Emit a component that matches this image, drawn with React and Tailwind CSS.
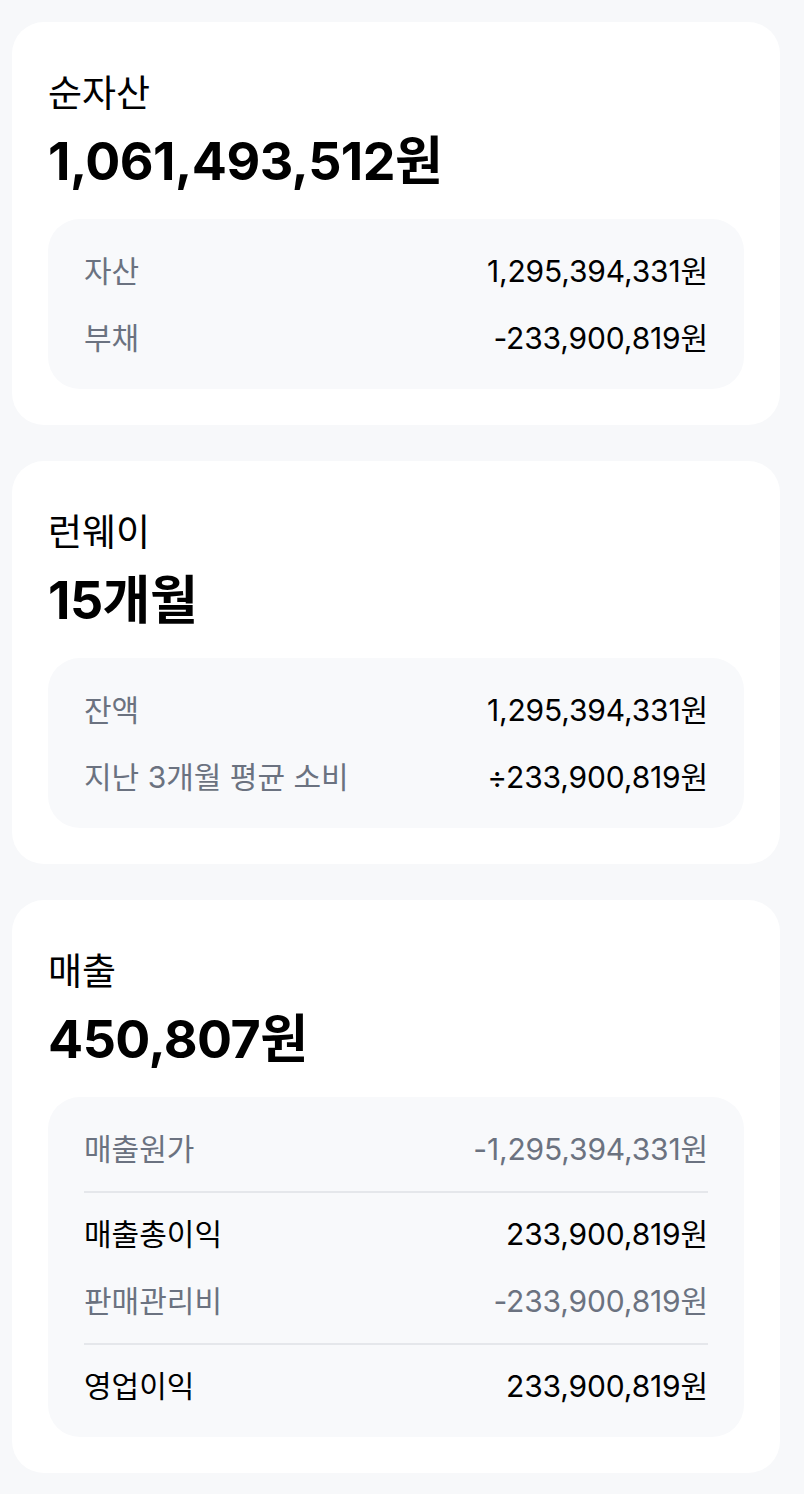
const FONT = 'font-["Inter","Noto_Sans_CJK_KR",sans-serif]';

const SECTIONS = [
  {
    title: '순자산',
    value: '1,061,493,512원',
    rows: [
      { label: '자산', value: '1,295,394,331원' },
      { label: '부채', value: '-233,900,819원' },
    ],
  },
  {
    title: '런웨이',
    value: '15개월',
    rows: [
      { label: '잔액', value: '1,295,394,331원' },
      { label: '지난 3개월 평균 소비', value: '÷233,900,819원' },
    ],
  },
  {
    title: '매출',
    value: '450,807원',
    rows: [
      { label: '매출원가', value: '-1,295,394,331원', muted: true, divider: true },
      { label: '매출총이익', value: '233,900,819원', strong: true },
      { label: '판매관리비', value: '-233,900,819원', muted: true, divider: true },
      { label: '영업이익', value: '233,900,819원', strong: true },
    ],
  },
];

function Row({ row }) {
  const labelColor = row.strong ? 'text-black' : 'text-[#6b7280]';
  const valueColor = row.muted ? 'text-[#6b7280]' : 'text-black';
  return (
    <div className="flex items-center justify-between text-[30px] leading-[36px]">
      <span className={labelColor}>{row.label}</span>
      <span className={`${valueColor} tracking-[-0.005em]`}>{row.value}</span>
    </div>
  );
}

function SummaryCard({ section }) {
  return (
    <div className="rounded-[32px] bg-white px-9 pt-[50px] pb-9">
      <h2 className="text-[37px] leading-[44px] text-black">{section.title}</h2>
      <p className="mt-4 text-[52px] leading-[60px] font-bold tracking-[-0.01em] text-black">
        {section.value}
      </p>
      <div className="mt-[27px] rounded-[32px] bg-[#f8f9fb] px-9 pt-[34px] pb-[33px]">
        <div className="flex flex-col">
          {section.rows.map((row, i) => {
            const prev = section.rows[i - 1];
            return (
              <div key={row.label}>
                {i > 0 && !prev.divider && <div className="h-[31px]" />}
                <Row row={row} />
                {row.divider && <div className="mt-6 mb-[23px] h-[2px] bg-[#e5e7eb]" />}
              </div>
            );
          })}
        </div>
      </div>
    </div>
  );
}

export default function App() {
  return (
    <div className={`min-h-screen bg-[#f7f8fa] pl-3 pr-6 pt-[22px] pb-6 ${FONT}`}>
      <div className="flex flex-col gap-9">
        {SECTIONS.map((s) => (
          <SummaryCard key={s.title} section={s} />
        ))}
      </div>
    </div>
  );
}
